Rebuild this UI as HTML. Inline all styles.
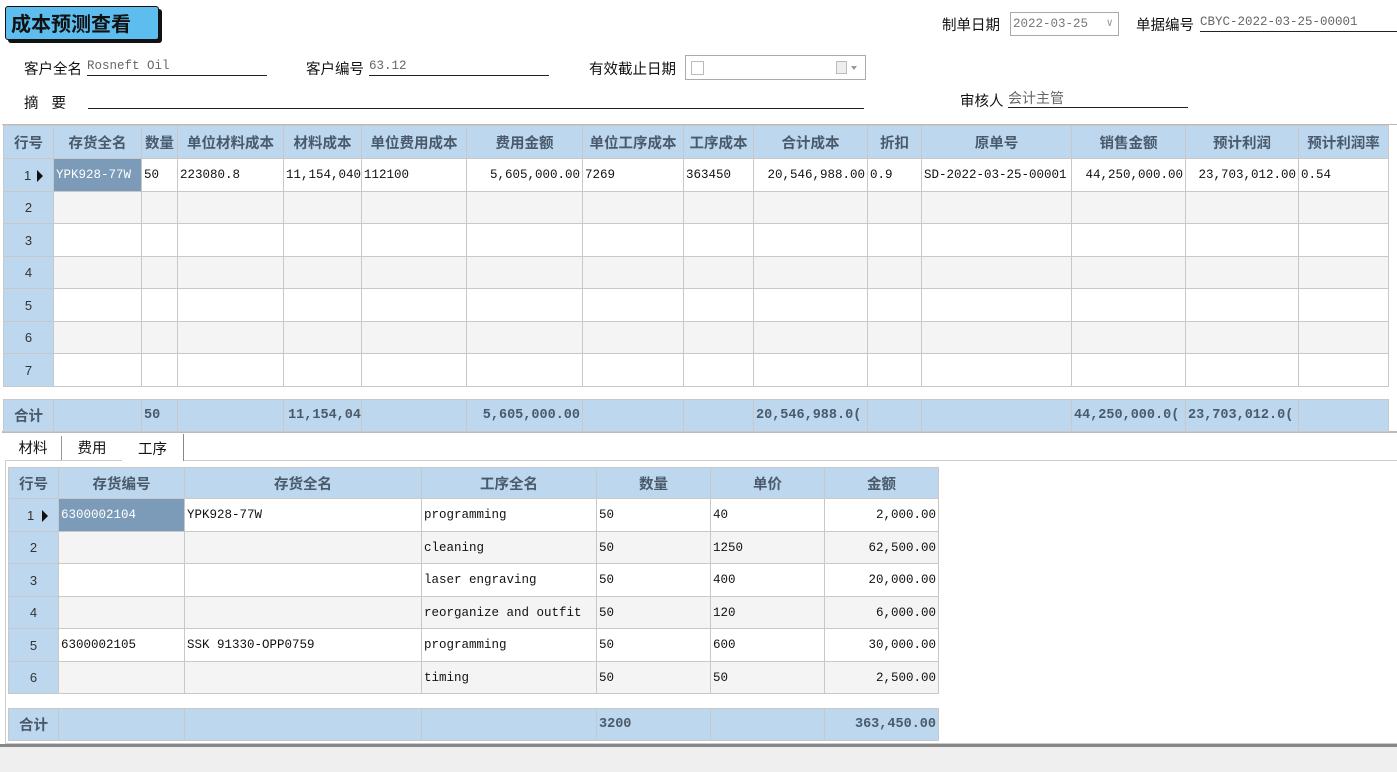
<!DOCTYPE html>
<html><head><meta charset="utf-8">
<style>
*{margin:0;padding:0;box-sizing:border-box}
body{width:1397px;height:772px;background:#fff;position:relative;overflow:hidden;font-family:"Liberation Sans","Noto Sans CJK SC",sans-serif;font-size:14px;color:#111}
.a{position:absolute;white-space:nowrap}
.title{left:5px;top:6px;width:154px;height:34px;background:#5cbdee;border:1px solid #111;border-radius:3px;box-shadow:3px 3px 0 #111;font-size:20px;font-weight:bold;line-height:32px;padding-left:5px;font-family:"Noto Sans CJK SC",sans-serif}
.lbl{font-size:14.5px;font-family:"Noto Sans CJK SC",sans-serif}
.val{font-family:"Liberation Mono","Noto Sans CJK SC",monospace;font-size:12.5px;color:#666;border-bottom:1px solid #222;height:18px;line-height:16px}
table{border-collapse:collapse;table-layout:fixed;position:absolute}
td,th{border:1px solid #c8c8c8;overflow:hidden;white-space:nowrap;padding:0 2px}
th{background:#bcd7ee;font-family:"Noto Sans CJK SC",sans-serif;font-weight:bold;font-size:14.5px;color:#4a5a6a;text-align:center}
td{font-family:"Liberation Mono","Noto Sans CJK SC",monospace;font-size:12.5px;color:#111}
td.rh{background:#bcd7ee;text-align:center;font-family:"Liberation Sans",sans-serif;font-size:13px;color:#333}
tr.alt td{background:#f4f4f4}
tr.alt td.rh{background:#bcd7ee}
td.sel{background:#7b9bb8!important;color:#fff}
td.r{text-align:right}
.tot td{background:#bcd7ee;font-weight:bold;color:#4a5a6a;font-size:13.5px}
.tot td.f{font-family:"Noto Sans CJK SC",sans-serif;font-size:14.5px;text-align:center}
.arrow{display:inline-block;width:0;height:0;border-left:6px solid #111;border-top:6px solid transparent;border-bottom:6px solid transparent;vertical-align:middle;margin-left:6px}
</style></head><body>
<div class="a title">成本预测查看</div>

<div class="a lbl" style="left:942px;top:14px">制单日期</div>
<div class="a" style="left:1010px;top:12px;width:109px;height:24px;border:1px solid #aaa;font-family:'Liberation Mono',monospace;font-size:12.5px;color:#777;line-height:22px;padding-left:2px">2022-03-25<span style="position:absolute;right:5px;top:0;color:#999;font-size:11px">∨</span></div>
<div class="a lbl" style="left:1136px;top:14px">单据编号</div>
<div class="a val" style="left:1200px;top:14px;width:197px">CBYC-2022-03-25-00001</div>

<div class="a lbl" style="left:24px;top:58px">客户全名</div>
<div class="a val" style="left:87px;top:58px;width:180px">Rosneft Oil</div>
<div class="a lbl" style="left:306px;top:58px">客户编号</div>
<div class="a val" style="left:369px;top:58px;width:180px">63.12</div>
<div class="a lbl" style="left:589px;top:58px">有效截止日期</div>
<div class="a" style="left:685px;top:55px;width:181px;height:25px;border:1px solid #aaa"><div style="position:absolute;left:5px;top:5px;width:13px;height:14px;border:1px solid #bbb"></div><div style="position:absolute;right:18px;top:5px;width:11px;height:13px;border:1px solid #bbb;background:#eee"></div><div style="position:absolute;right:8px;top:10px;border-top:4px solid #999;border-left:3px solid transparent;border-right:3px solid transparent"></div></div>

<div class="a lbl" style="left:24px;top:92px">摘&nbsp;&nbsp;&nbsp;&nbsp;要</div>
<div class="a" style="left:88px;top:108px;width:776px;border-bottom:1px solid #222"></div>
<div class="a lbl" style="left:960px;top:90px">审核人</div>
<div class="a val" style="left:1008px;top:90px;width:180px;font-family:'Noto Sans CJK SC',sans-serif;font-size:14px">会计主管</div>

<div class="a" style="left:2px;top:124px;width:1395px;height:309px;border-top:1px solid #bbb;border-bottom:2px solid #bbb"></div>
<table style="left:3px;top:125px;width:1385px">
<colgroup><col style="width:50px"><col style="width:88px"><col style="width:36px"><col style="width:106px"><col style="width:78px"><col style="width:105px"><col style="width:116px"><col style="width:101px"><col style="width:70px"><col style="width:114px"><col style="width:54px"><col style="width:150px"><col style="width:114px"><col style="width:113px"><col style="width:90px"></colgroup>
<tr style="height:33px"><th>行号</th><th>存货全名</th><th>数量</th><th>单位材料成本</th><th>材料成本</th><th>单位费用成本</th><th>费用金额</th><th>单位工序成本</th><th>工序成本</th><th>合计成本</th><th>折扣</th><th>原单号</th><th>销售金额</th><th>预计利润</th><th>预计利润率</th></tr>
<tr style="height:33px"><td class="rh" style="text-align:left;padding-left:20px">1<span class="arrow"></span></td><td class="sel">YPK928-77W</td><td>50</td><td>223080.8</td><td>11,154,040</td><td>112100</td><td class="r">5,605,000.00</td><td>7269</td><td>363450</td><td class="r">20,546,988.00</td><td>0.9</td><td>SD-2022-03-25-00001</td><td class="r">44,250,000.00</td><td class="r">23,703,012.00</td><td>0.54</td></tr>
<tr class="alt" style="height:32px"><td class="rh">2</td><td></td><td></td><td></td><td></td><td></td><td></td><td></td><td></td><td></td><td></td><td></td><td></td><td></td><td></td></tr>
<tr style="height:33px"><td class="rh">3</td><td></td><td></td><td></td><td></td><td></td><td></td><td></td><td></td><td></td><td></td><td></td><td></td><td></td><td></td></tr>
<tr class="alt" style="height:32px"><td class="rh">4</td><td></td><td></td><td></td><td></td><td></td><td></td><td></td><td></td><td></td><td></td><td></td><td></td><td></td><td></td></tr>
<tr style="height:33px"><td class="rh">5</td><td></td><td></td><td></td><td></td><td></td><td></td><td></td><td></td><td></td><td></td><td></td><td></td><td></td><td></td></tr>
<tr class="alt" style="height:32px"><td class="rh">6</td><td></td><td></td><td></td><td></td><td></td><td></td><td></td><td></td><td></td><td></td><td></td><td></td><td></td><td></td></tr>
<tr style="height:33px"><td class="rh">7</td><td></td><td></td><td></td><td></td><td></td><td></td><td></td><td></td><td></td><td></td><td></td><td></td><td></td><td></td></tr>
</table>
<table class="tot" style="left:3px;top:399px;width:1385px">
<colgroup><col style="width:50px"><col style="width:88px"><col style="width:36px"><col style="width:106px"><col style="width:78px"><col style="width:105px"><col style="width:116px"><col style="width:101px"><col style="width:70px"><col style="width:114px"><col style="width:54px"><col style="width:150px"><col style="width:114px"><col style="width:113px"><col style="width:90px"></colgroup>
<tr style="height:32px"><td class="f">合计</td><td></td><td>50</td><td></td><td style="text-align:right;padding-right:0">11,154,04</td><td></td><td class="r">5,605,000.00</td><td></td><td></td><td>20,546,988.0(</td><td></td><td></td><td>44,250,000.0(</td><td>23,703,012.0(</td><td></td></tr>
</table>

<div class="a lbl" style="left:5px;top:436px;width:57px;height:24px;border-right:1px solid #999;text-align:center;line-height:24px">材料</div>
<div class="a lbl" style="left:62px;top:436px;width:60px;height:24px;text-align:center;line-height:24px">费用</div>
<div class="a lbl" style="left:122px;top:434px;width:62px;height:27px;border-right:1px solid #888;background:#fff;text-align:center;line-height:30px;z-index:2">工序</div>
<div class="a" style="left:5px;top:460px;width:1392px;height:284px;border:1px solid #ccc;border-right:none"></div>

<table style="left:8px;top:467px;width:930px">
<colgroup><col style="width:50px"><col style="width:126px"><col style="width:237px"><col style="width:175px"><col style="width:114px"><col style="width:114px"><col style="width:114px"></colgroup>
<tr style="height:31px"><th>行号</th><th>存货编号</th><th>存货全名</th><th>工序全名</th><th>数量</th><th>单价</th><th>金额</th></tr>
<tr style="height:33px"><td class="rh" style="text-align:left;padding-left:18px">1<span class="arrow" style="margin-left:8px"></span></td><td class="sel">6300002104</td><td>YPK928-77W</td><td>programming</td><td>50</td><td>40</td><td class="r">2,000.00</td></tr>
<tr class="alt" style="height:32px"><td class="rh">2</td><td></td><td></td><td>cleaning</td><td>50</td><td>1250</td><td class="r">62,500.00</td></tr>
<tr style="height:33px"><td class="rh">3</td><td></td><td></td><td>laser engraving</td><td>50</td><td>400</td><td class="r">20,000.00</td></tr>
<tr class="alt" style="height:32px"><td class="rh">4</td><td></td><td></td><td>reorganize and outfit</td><td>50</td><td>120</td><td class="r">6,000.00</td></tr>
<tr style="height:33px"><td class="rh">5</td><td>6300002105</td><td>SSK 91330-OPP0759</td><td>programming</td><td>50</td><td>600</td><td class="r">30,000.00</td></tr>
<tr class="alt" style="height:32px"><td class="rh">6</td><td></td><td></td><td>timing</td><td>50</td><td>50</td><td class="r">2,500.00</td></tr>
</table>
<table class="tot" style="left:8px;top:708px;width:930px">
<colgroup><col style="width:50px"><col style="width:126px"><col style="width:237px"><col style="width:175px"><col style="width:114px"><col style="width:114px"><col style="width:114px"></colgroup>
<tr style="height:32px"><td class="f">合计</td><td></td><td></td><td></td><td>3200</td><td></td><td class="r">363,450.00</td></tr>
</table>

<div class="a" style="left:0;top:744px;width:1397px;height:3px;background:#888"></div>
<div class="a" style="left:0;top:747px;width:1397px;height:25px;background:#efefef"></div>
</body></html>
